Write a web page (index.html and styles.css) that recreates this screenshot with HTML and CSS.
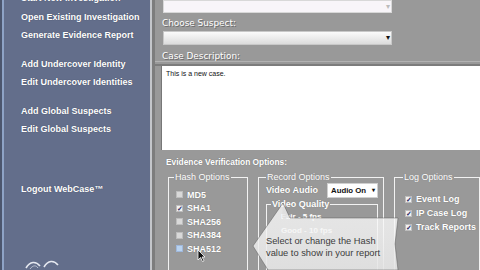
FILE: index.html
```html
<!DOCTYPE html>
<html>
<head>
<meta charset="utf-8">
<link rel="stylesheet" href="styles.css">
</head>
<body>
<div class="app">
  <nav class="sidebar">
    <ul class="menu">
      <li class="item">Start New Investigation</li>
      <li class="item">Open Existing Investigation</li>
      <li class="item">Generate Evidence Report</li>
      <li class="item gap">Add Undercover Identity</li>
      <li class="item">Edit Undercover Identities</li>
      <li class="item gap">Add Global Suspects</li>
      <li class="item">Edit Global Suspects</li>
      <li class="item logout">Logout WebCase&#8482;</li>
    </ul>
    <div class="logo">
      <svg width="40" height="14" viewBox="0 0 40 14">
        <path d="M2 12 C6 5 12 5 16 10" fill="none" stroke="#e6e9f0" stroke-width="1.6"/>
        <path d="M20 11 C24 4 30 4 34 9" fill="none" stroke="#e6e9f0" stroke-width="1.6"/>
        <path d="M6 13 C9 9 12 9 14 12" fill="none" stroke="#b9c0d0" stroke-width="1"/>
      </svg>
    </div>
  </nav>
  <div class="divider"></div>
  <main class="main">
    <div class="select plain"><span class="arrow faint">&#9662;</span></div>
    <div class="lbl first">Choose Suspect:</div>
    <div class="select grad"><span class="arrow">&#9662;</span></div>
    <div class="lbl second">Case Description:</div>
    <div class="rule"></div>
    <div class="textarea">This is a new case.</div>
    <div class="evid">Evidence Verification Options:</div>
    <div class="options">
      <fieldset class="fs hash">
        <legend>Hash Options</legend>
        <div class="chk"><span class="box"></span>MD5</div>
        <div class="chk"><span class="box on">&#10003;</span>SHA1</div>
        <div class="chk"><span class="box"></span>SHA256</div>
        <div class="chk"><span class="box"></span>SHA384</div>
        <div class="chk"><span class="box blue"></span>SHA512</div>
      </fieldset>
      <fieldset class="fs record">
        <legend>Record Options</legend>
        <div class="va">
          <span class="va-lbl">Video Audio</span>
          <span class="va-sel"><span>Audio On</span><span class="caret">&#9662;</span></span>
        </div>
        <fieldset class="fs vq">
          <legend>Video Quality</legend>
          <div class="rad">Fair - 5 fps</div>
          <div class="rad">Good - 10 fps</div>
        </fieldset>
      </fieldset>
      <fieldset class="fs log">
        <legend>Log Options</legend>
        <div class="chk"><span class="box on">&#10003;</span>Event Log</div>
        <div class="chk"><span class="box on">&#10003;</span>IP Case Log</div>
        <div class="chk"><span class="box on">&#10003;</span>Track Reports</div>
      </fieldset>
    </div>
    <div class="tip">
      <svg class="tip-shape" width="150" height="70" viewBox="0 0 150 70">
        <defs>
          <linearGradient id="tg" x1="0" y1="0" x2="0" y2="1">
            <stop offset="0" stop-color="#ffffff" stop-opacity="0.75"/>
            <stop offset="1" stop-color="#e4e4e4" stop-opacity="0.92"/>
          </linearGradient>
        </defs>
        <polygon points="31,3 38,18 30,18" fill="#6e6e6e" fill-opacity="0.55"/>
        <polygon points="31,3 1,46 16,70 146,70 143,44 146,18 38,18" fill="url(#tg)" stroke="#555" stroke-opacity="0.6" stroke-width="0.8"/>
      </svg>
      <div class="tip-text">Select or change the Hash<br>value to show in your report</div>
    </div>
    <svg class="cursor" width="9" height="13" viewBox="0 0 9 13">
      <path d="M1 1 L1 11 L3.5 8.5 L5.5 12.5 L7 11.8 L5 8 L8 8 Z" fill="#111" stroke="#fff" stroke-width="0.8"/>
    </svg>
  </main>
</div>
</body>
</html>
```

FILE: styles.css
```css
* { box-sizing: border-box; }
html, body { margin: 0; padding: 0; }
body {
  width: 480px;
  height: 270px;
  overflow: hidden;
  background: #999999;
  font-family: "Liberation Sans", Arial, sans-serif;
}
.app {
  display: flex;
  width: 480px;
  height: 270px;
}
.sidebar {
  width: 150px;
  flex: none;
  background: #636e8b;
  border-left: 2px solid #4c566e;
  box-shadow: inset 2px 0 0 #8ea3c6;
  display: flex;
  flex-direction: column;
  justify-content: space-between;
  overflow: hidden;
}
.menu {
  list-style: none;
  margin: -11px 0 0 0;
  padding: 0 0 0 19px;
  flex: none;
}
.item {
  color: #ffffff;
  font-weight: bold;
  font-size: 9px;
  line-height: 18.5px;
  height: 18.5px;
  white-space: nowrap;
  text-shadow: 0 0 1px #3c4458;
}
.item.gap { margin-top: 10px; }
.item.logout { margin-top: 41px; }
.logo {
  padding: 0 0 0 22px;
  height: 14px;
  line-height: 0;
  flex: none;
}
.divider {
  width: 5px;
  flex: none;
  background: #7d7d7d;
  border-left: 2px solid #c4c6ca;
}
.main {
  flex: 1;
  position: relative;
  display: flex;
  flex-direction: column;
  overflow: hidden;
}
.main > * { flex-shrink: 0; }
.select {
  margin-left: 8px;
  width: 229px;
  position: relative;
  border: 1px solid #d8d8d8;
}
.select.plain {
  height: 13px;
  background: #f8f5f9;
}
.select.grad {
  height: 14px;
  background: linear-gradient(#fbfbfb, #dcdcdc);
  border-color: #c8c8c8;
}
.arrow {
  position: absolute;
  right: 1px;
  top: 0;
  font-size: 8px;
  line-height: 12px;
  color: #111;
}
.arrow.faint { color: #bbb; }
.lbl {
  margin-left: 7px;
  color: #ffffff;
  font-family: "DejaVu Sans", sans-serif;
  font-size: 8.9px;
  line-height: 11px;
  text-shadow: 1px 1px 0 #6a6a6a;
  white-space: nowrap;
}
.lbl.first { height: 18px; padding-top: 5px; }
.lbl.second { height: 16px; padding-top: 6px; }
.rule {
  height: 5px;
  border-top: 1px solid #b2b2b2;
  border-bottom: 2px solid #7c7c7c;
}
.textarea {
  margin-left: 6px;
  height: 84px;
  background: #ffffff;
  border-left: 1px solid #777;
  font-size: 7px;
  line-height: 9px;
  padding: 3px 4px;
  color: #111;
}
.evid {
  height: 22px;
  padding: 7px 0 0 11px;
  color: #ffffff;
  font-weight: bold;
  font-size: 8.4px;
  line-height: 11px;
  white-space: nowrap;
  text-shadow: 0 0 1px #666;
}
.options {
  display: flex;
  gap: 10px;
  margin-left: 13px;
  align-items: flex-start;
}
.fs {
  margin: 0;
  border: 1px solid #f2f2f2;
  padding: 0 5px;
  min-width: 0;
  height: 110px;
}
.fs legend {
  color: #ffffff;
  font-size: 9px;
  line-height: 11px;
  padding: 0 1px;
  text-shadow: 0 0 1px #777;
  white-space: nowrap;
}
.hash { width: 80px; flex: none; padding-top: 5px; }
.record { width: 126px; flex: none; padding: 0 5px 0 7px; }
.log { flex: 1; padding-top: 9px; padding-left: 8px; }
.chk {
  display: flex;
  align-items: center;
  gap: 4px;
  height: 13.5px;
  color: #ffffff;
  font-weight: bold;
  font-size: 9px;
  white-space: nowrap;
  text-shadow: 0 0 1px #666;
}
.log .chk { height: 14px; }
.box {
  width: 7px;
  height: 7px;
  background: #d9d9d9;
  border: 1px solid #bdbdbd;
  flex: none;
  font-size: 7px;
  line-height: 5px;
  color: #2a2a66;
  text-align: center;
  margin-left: 2px;
  text-shadow: none;
  overflow: hidden;
}
.box.on { background: #f2f2f2; }
.box.blue { background: #b9d3f0; border-color: #9fb8dc; }
.va {
  display: flex;
  align-items: center;
  justify-content: space-between;
  height: 16px;
  margin-top: -1px;
}
.va-lbl {
  color: #ffffff;
  font-weight: bold;
  font-size: 9px;
  text-shadow: 0 0 1px #666;
}
.va-sel {
  width: 51px;
  height: 15px;
  background: #ffffff;
  border: 1px solid #cfcfcf;
  color: #111;
  font-weight: bold;
  font-size: 7.8px;
  line-height: 13px;
  padding: 0 2px 0 3px;
  white-space: nowrap;
  display: flex;
  justify-content: space-between;
  flex: none;
}
.caret { font-size: 6px; }
.vq {
  margin-top: 1px;
  height: 80px;
  padding: 0 4px;
}
.vq legend {
  font-weight: bold;
  font-size: 9px;
}
.rad {
  color: #ffffff;
  font-weight: bold;
  font-size: 8px;
  line-height: 14px;
  padding-left: 10px;
  white-space: nowrap;
}
.tip {
  position: absolute;
  left: 97px;
  top: 200px;
  width: 150px;
  height: 70px;
}
.tip-shape {
  position: absolute;
  left: 0;
  top: 0;
}
.tip-text {
  position: absolute;
  left: 14px;
  top: 35px;
  color: #3c3c3c;
  font-size: 9.3px;
  line-height: 12px;
  white-space: nowrap;
}
.cursor {
  position: absolute;
  left: 42px;
  top: 249px;
}
```
